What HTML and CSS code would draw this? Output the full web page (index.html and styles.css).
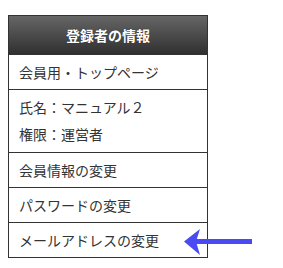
FILE: index.html
```html
<!DOCTYPE html>
<html lang="ja">
<head>
<meta charset="utf-8">
<link rel="stylesheet" href="styles.css">
</head>
<body>
<div class="page">
  <div class="menu">
    <div class="menu-head">登録者の情報</div>
    <div class="row">会員用・トップページ</div>
    <div class="row multi">
      <div class="line">氏名：マニュアル２</div>
      <div class="line">権限：運営者</div>
    </div>
    <div class="row">会員情報の変更</div>
    <div class="row">パスワードの変更</div>
    <div class="row last">メールアドレスの変更</div>
    <svg class="arrow" width="70" height="28" viewBox="0 0 70 28">
      <rect x="6" y="10" width="62" height="5" fill="#4a4af2"/>
      <path d="M0 12.5 L16 0 L12 12.5 L16 26 Z" fill="#4a4af2"/>
    </svg>
  </div>
</div>
</body>
</html>
```

FILE: styles.css
```css
html, body {
  margin: 0;
  padding: 0;
  background: #fff;
}
.page {
  padding: 15px 0 0 8px;
}
.menu {
  position: relative;
  width: 198px;
  border: 1px solid #333;
  font-family: "Noto Sans CJK JP", "Noto Sans", sans-serif;
  font-size: 14px;
  color: #333;
}
.menu-head {
  height: 38px;
  line-height: 38px;
  text-align: center;
  color: #fff;
  font-weight: bold;
  background: linear-gradient(#666666, #303030);
  text-shadow: 0 0 1px #222;
}
.row {
  height: 34px;
  line-height: 34px;
  padding: 0 10px;
  border-top: 1px solid #333;
}
.row.multi {
  height: auto;
  padding: 4px 10px;
}
.row.multi .line {
  line-height: 27px;
}
.arrow {
  position: absolute;
  left: 175px;
  top: 213px;
}
```
